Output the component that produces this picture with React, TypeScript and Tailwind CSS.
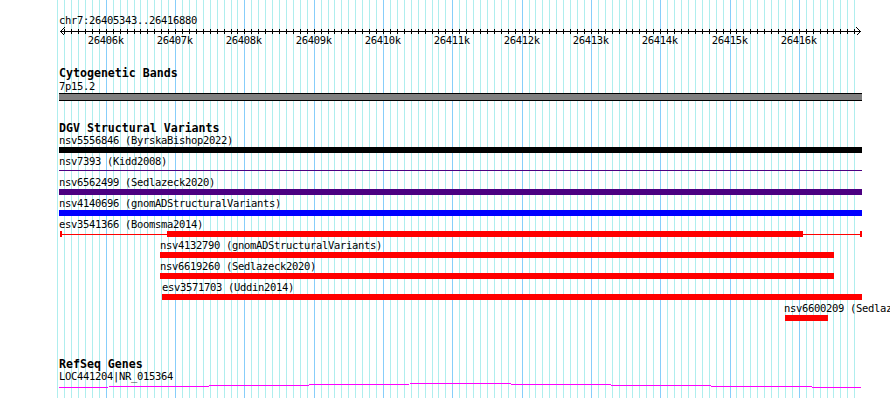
import React from "react";

const xOf = (bp: number) => Math.floor(106.3 + (bp - 26406000) * 0.0693);

const gridLines: { x: number; major: boolean; bp: number }[] = [];
for (let bp = 26405300; bp <= 26416800; bp += 100) {
  gridLines.push({ x: xOf(bp), major: bp % 1000 === 0, bp });
}

type Feature = {
  label: string;
  labelX: number;
  kind: "bar" | "line" | "gapped";
  x1: number;
  x2: number;
  thick?: [number, number];
  color: string;
};

const features: Feature[] = [
  { label: "nsv5556846 (ByrskaBishop2022)", labelX: 59, kind: "bar", x1: 59, x2: 862, color: "bg-black" },
  { label: "nsv7393 (Kidd2008)", labelX: 59, kind: "line", x1: 59, x2: 862, color: "bg-[#4b0082]" },
  { label: "nsv6562499 (Sedlazeck2020)", labelX: 59, kind: "bar", x1: 59, x2: 862, color: "bg-[#4b0082]" },
  { label: "nsv4140696 (gnomADStructuralVariants)", labelX: 59, kind: "bar", x1: 59, x2: 862, color: "bg-[#0000ff]" },
  { label: "esv3541366 (Boomsma2014)", labelX: 59, kind: "gapped", x1: 60, x2: 862, thick: [167, 803], color: "bg-[#ff0000]" },
  { label: "nsv4132790 (gnomADStructuralVariants)", labelX: 160, kind: "bar", x1: 160, x2: 834, color: "bg-[#ff0000]" },
  { label: "nsv6619260 (Sedlazeck2020)", labelX: 160, kind: "bar", x1: 160, x2: 834, color: "bg-[#ff0000]" },
  { label: "esv3571703 (Uddin2014)", labelX: 162, kind: "bar", x1: 162, x2: 862, color: "bg-[#ff0000]" },
  { label: "nsv6600209 (Sedlazeck2020)", labelX: 784, kind: "bar", x1: 785, x2: 828, color: "bg-[#ff0000]" },
];

function Glyph({ f }: { f: Feature }) {
  if (f.kind === "bar") {
    return <div className={`h-[6px] ${f.color}`} style={{ marginLeft: f.x1, width: f.x2 - f.x1 }} />;
  }
  if (f.kind === "line") {
    return (
      <div className="h-[6px] pt-[2px]">
        <div className={`h-px ${f.color}`} style={{ marginLeft: f.x1, width: f.x2 - f.x1 }} />
      </div>
    );
  }
  const [t1, t2] = f.thick!;
  return (
    <div className="flex h-[6px] items-center" style={{ marginLeft: f.x1 }}>
      <div className={`h-[6px] w-[2px] ${f.color}`} />
      <div className={`h-px ${f.color}`} style={{ width: t1 - f.x1 - 2 }} />
      <div className={`h-[6px] ${f.color}`} style={{ width: t2 - t1 }} />
      <div className={`h-px ${f.color}`} style={{ width: f.x2 - t2 - 2 }} />
      <div className={`h-[6px] w-[2px] ${f.color}`} />
    </div>
  );
}

function Ruler() {
  const ticks = gridLines.filter((g) => g.x > 62 && g.x < 858);
  return (
    <svg width={890} height={22} className="block" shapeRendering="crispEdges">
      <rect x={60} y={5} width={801} height={1} fill="#000" />
      {ticks.map((t) => (
        <line key={t.bp} x1={t.x + 0.5} x2={t.x + 0.5} y1={3} y2={8} stroke="#000" strokeWidth={1} />
      ))}
      <polyline points="64.5,1.5 60.5,5.5 64.5,9.5" fill="none" stroke="#000" strokeWidth={1} />
      <polyline points="856.5,1.5 860.5,5.5 856.5,9.5" fill="none" stroke="#000" strokeWidth={1} />
      {gridLines
        .filter((g) => g.major)
        .map((g) => (
          <text
            key={g.bp}
            x={g.x - 0.2}
            y={18}
            textAnchor="middle"
            fontFamily="'DejaVu Sans Mono', monospace"
            fontSize={10.5}
            letterSpacing={-0.32}
            fill="#000"
            shapeRendering="auto"
          >
            {`${g.bp / 1000}k`}
          </text>
        ))}
    </svg>
  );
}

export default function App() {
  return (
    <div className="relative h-[398px] w-[890px] overflow-hidden bg-white font-['DejaVu_Sans_Mono',monospace] text-[10.5px] leading-[13px] tracking-[-0.32px] text-black">
      <svg width={890} height={398} className="pointer-events-none absolute inset-0" shapeRendering="crispEdges">
        {gridLines.map((g) => (
          <line
            key={g.bp}
            x1={g.x + 0.5}
            x2={g.x + 0.5}
            y1={0}
            y2={398}
            stroke={g.major ? "#87cefa" : "#afeeee"}
            strokeWidth={1}
          />
        ))}
      </svg>

      <div className="relative pt-[15px]">
        <div className="h-[11px] whitespace-nowrap pl-[59px] leading-[11px]">chr7:26405343..26416880</div>
        <Ruler />

        <div className="mt-[19px] h-[13px] pl-[59px] text-[11.6px] font-bold tracking-normal">Cytogenetic Bands</div>
        <div className="h-[13px] pl-[59px]">7p15.2</div>
        <div className="ml-[59px] h-[8px] w-[803px] border-y border-black bg-[#808080]" />

        <div className="mt-[21px] h-[12px] pl-[59px] text-[11.6px] leading-[12px] font-bold tracking-normal">DGV Structural Variants</div>
        {features.map((f) => (
          <div key={f.label} className="h-[21px]">
            <div className="h-[13px] whitespace-nowrap" style={{ marginLeft: f.labelX }}>
              {f.label}
            </div>
            <Glyph f={f} />
          </div>
        ))}

        <div className="mt-[36px] h-[11px] pl-[59px] text-[11.6px] leading-[11px] font-bold tracking-normal">RefSeq Genes</div>
        <div className="h-[12px] pl-[59px] leading-[12px]">LOC441204|NR_015364</div>
        <svg width={890} height={8} className="block" shapeRendering="crispEdges">
          <polyline points="59,5.5 460,1.5 861,5.5" fill="none" stroke="#ff00ff" strokeWidth={1} />
        </svg>
      </div>
    </div>
  );
}
